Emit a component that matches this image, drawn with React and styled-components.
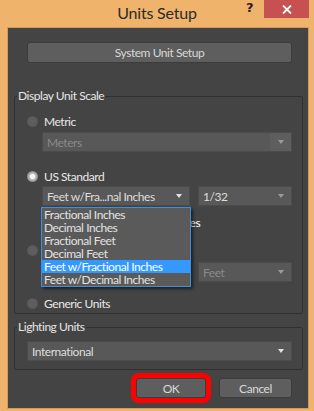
import React from 'react'
import styled, { createGlobalStyle } from 'styled-components'

const GlobalStyle = createGlobalStyle`
  html, body {
    margin: 0;
    padding: 0;
  }
  body {
    width: 314px;
    height: 411px;
    overflow: hidden;
    background: #f0b36c;
    font-family: Lato, "Noto Sans", sans-serif;
    letter-spacing: -0.45px;
  }
`

const Window = styled.div`
  width: 314px;
  height: 411px;
  box-sizing: border-box;
  background: #f0b36c;
  display: flex;
  flex-direction: column;
`

const TitleBar = styled.div`
  height: 28px;
  flex: none;
  display: grid;
  grid-template-columns: 1fr auto 1fr;
  align-items: start;
`

const Title = styled.div`
  grid-column: 2;
  font-size: 16px;
  line-height: 26px;
  letter-spacing: -0.2px;
  color: #2b2b2b;
`

const Controls = styled.div`
  justify-self: end;
  display: flex;
  align-items: flex-start;
  padding-right: 5px;
`

const Help = styled.span`
  font: bold 13px "DejaVu Sans", sans-serif;
  line-height: 16px;
  color: #222;
  margin-right: 11px;
`

const Close = styled.div`
  width: 45px;
  height: 18px;
  background: #c75050;
  display: flex;
  align-items: center;
  justify-content: center;
`

const Client = styled.div`
  flex: 1;
  margin: 0 6px 3px 8px;
  background: #444444;
  box-shadow: 0 0 0 1px #d49a5c;
  display: flex;
  flex-direction: column;
  padding-top: 14px;
`

const WideButton = styled.div`
  height: 21px;
  margin: 0 16px 0 19px;
  box-sizing: border-box;
  background: #5e5e5e;
  border: 1px solid #3c3c3c;
  border-radius: 3px;
  display: flex;
  align-items: center;
  justify-content: center;
  font-size: 12px;
  color: #d8d8d8;
`

const Group = styled.fieldset`
  margin: ${p => p.$mt}px 5px 0 6px;
  padding: 0 10px ${p => p.$pb}px 12px;
  border: 1px solid #303030;
  border-radius: 2px;
  min-width: 0;
  display: flex;
  flex-direction: column;
`

const Legend = styled.legend`
  margin-left: -10px;
  padding: 0 1px;
  font-size: 12px;
  line-height: 14px;
  color: #e6e6e6;
`

const RadioRow = styled.div`
  display: flex;
  align-items: center;
  gap: 6px;
  height: 14px;
  margin-top: ${p => p.$mt}px;
  margin-left: ${p => p.$ml || 0}px;
  font-size: 12px;
  color: #e8e8e8;
`

const Radio = styled.span`
  width: 11px;
  height: 11px;
  flex: none;
  border-radius: 50%;
  background: ${p => p.$checked
    ? 'radial-gradient(circle, #f4f4f4 0 2.2px, #b4b4b4 3.4px, #8c8c8c 5.5px)'
    : 'radial-gradient(circle, #5e5e5e 0 3.5px, #565656 5.5px)'};
`

const FieldRow = styled.div`
  display: flex;
  align-items: center;
  gap: 8px;
  height: 20px;
  margin-top: ${p => p.$mt}px;
  margin-left: ${p => p.$ml || 0}px;
`

const Select = styled.div`
  position: relative;
  flex: none;
  width: ${p => p.$w}px;
  height: 20px;
  box-sizing: border-box;
  display: flex;
  align-items: center;
  background: #585858;
  border: 1px solid #4b4b4b;
  font-size: 12px;
  color: ${p => (p.$disabled ? '#8a8a8a' : '#dedede')};
`

const SelectText = styled.span`
  flex: 1;
  padding-left: 4px;
  white-space: nowrap;
  overflow: hidden;
`

const ArrowBox = styled.span`
  width: 21px;
  align-self: stretch;
  display: flex;
  align-items: center;
  justify-content: center;
  background: ${p => (p.$shade ? '#5e5e5e' : 'transparent')};
`

const Arrow = styled.span`
  width: 0;
  height: 0;
  border-left: 3.5px solid transparent;
  border-right: 3.5px solid transparent;
  border-top: 4px solid ${p => (p.$dim ? '#9a9a9a' : '#e2e2e2')};
`

const Input = styled.div`
  height: 20px;
  box-sizing: border-box;
  width: ${p => (p.$w ? `${p.$w}px` : 'auto')};
  flex: ${p => (p.$w ? 'none' : 1)};
  background: #585858;
  border: 1px solid #4b4b4b;
`

const Equals = styled.span`
  width: 6px;
  height: 4px;
  border-top: 1px solid #8a8a8a;
  border-bottom: 1px solid #8a8a8a;
`

const Option = styled.div`
  display: flex;
  align-items: center;
  gap: 5px;
  color: ${p => (p.$bright ? '#ffffff' : '#e8e8e8')};
`

const DropList = styled.div`
  position: absolute;
  top: 20px;
  left: -2px;
  width: 150px;
  box-sizing: border-box;
  border: 1px solid #3d8fe2;
  background: #5a5a5a;
  box-shadow: 2px 2px 3px rgba(0, 0, 0, 0.55);
  z-index: 2;
`

const Item = styled.div`
  height: 13px;
  line-height: 13px;
  padding-left: 2px;
  font-size: 12px;
  white-space: nowrap;
  color: ${p => (p.$active ? '#ffffff' : '#e2e2e2')};
  background: ${p => (p.$active ? '#3399ff' : 'transparent')};
`

const Buttons = styled.div`
  display: flex;
  justify-content: flex-end;
  gap: 13px;
  margin-top: 8px;
  padding-right: 16px;
`

const Button = styled.div`
  width: ${p => p.$w}px;
  height: 20px;
  box-sizing: border-box;
  background: #5e5e5e;
  border: 1px solid #3c3c3c;
  border-radius: 3px;
  display: flex;
  align-items: center;
  justify-content: center;
  font-size: 12px;
  color: #d8d8d8;
  box-shadow: ${p => (p.$marked ? '0 0 0 5px #ff0000' : 'none')};
`

const units = [
  'Fractional Inches',
  'Decimal Inches',
  'Fractional Feet',
  'Decimal Feet',
  'Feet w/Fractional Inches',
  'Feet w/Decimal Inches',
]

const Dropdown = ({ w, text, disabled, shade, dim, children }) => (
  <Select $w={w} $disabled={disabled}>
    <SelectText>{text}</SelectText>
    <ArrowBox $shade={shade}>
      <Arrow $dim={dim || disabled} />
    </ArrowBox>
    {children}
  </Select>
)

export default function App() {
  return (
    <>
      <GlobalStyle />
      <Window>
        <TitleBar>
          <Title>Units Setup</Title>
          <Controls>
            <Help>?</Help>
            <Close>
              <svg width="10" height="9" viewBox="0 0 10 9">
                <path d="M1 0.5 L9 8.5 M9 0.5 L1 8.5" stroke="#fff" strokeWidth="1.8" />
              </svg>
            </Close>
          </Controls>
        </TitleBar>

        <Client>
          <WideButton>System Unit Setup</WideButton>

          <Group $mt={26} $pb={3}>
            <Legend>Display Unit Scale</Legend>

            <RadioRow $mt={11}>
              <Radio />
              Metric
            </RadioRow>
            <FieldRow $mt={4} $ml={15}>
              <Dropdown w={250} text="Meters" disabled shade />
            </FieldRow>

            <RadioRow $mt={17}>
              <Radio $checked />
              US Standard
            </RadioRow>
            <FieldRow $mt={3} $ml={15}>
              <Dropdown w={148} text="Feet w/Fra...nal Inches">
                <DropList>
                  {units.map(u => (
                    <Item key={u} $active={u === 'Feet w/Fractional Inches'}>{u}</Item>
                  ))}
                </DropList>
              </Dropdown>
              <Dropdown w={94} text="1/32" dim />
            </FieldRow>
            <RadioRow $mt={9} $ml={126}>
              <Option $bright>
                <Radio />
                Inches
              </Option>
            </RadioRow>

            <RadioRow $mt={14}>
              <Radio />
            </RadioRow>
            <FieldRow $mt={5} $ml={15}>
              <Input $w={30} />
              <Equals />
              <Input />
              <Dropdown w={94} text="Feet" disabled />
            </FieldRow>

            <RadioRow $mt={14}>
              <Radio />
              Generic Units
            </RadioRow>
          </Group>

          <Group $mt={6} $pb={8}>
            <Legend>Lighting Units</Legend>
            <FieldRow $mt={7}>
              <Dropdown w={265} text="International" />
            </FieldRow>
          </Group>

          <Buttons>
            <Button $w={70} $marked>OK</Button>
            <Button $w={73}>Cancel</Button>
          </Buttons>
        </Client>
      </Window>
    </>
  )
}
